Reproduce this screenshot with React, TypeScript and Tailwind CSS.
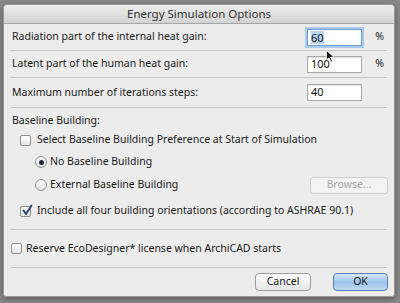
import React from 'react';

const font = { fontFamily: '"Noto Sans", "DejaVu Sans", sans-serif' };

function Separator() {
    return <div className="mx-[7px] h-px bg-[#c4c4c4]" />;
}

function NumberField({ value, focused }: { value: string; focused?: boolean }) {
    return (
        <div
            className={
                'w-[55px] h-[17px] bg-white flex items-center pl-[3px] text-[11px] text-[#111] ' +
                (focused
                    ? 'border border-[#6f9fd6] shadow-[0_0_0_2px_#a9c8ee]'
                    : 'border border-[#a8a8a8] shadow-[inset_0_1px_1px_rgba(0,0,0,0.12)]')
            }
        >
            {focused ? <span className="bg-[#b6d3f5] leading-[13px]">{value}</span> : value}
        </div>
    );
}

function Checkbox({ checked }: { checked?: boolean }) {
    return (
        <div className="w-[11px] h-[11px] rounded-[2px] border border-[#8e8e8e] bg-gradient-to-b from-white to-[#e4e4e4] relative shrink-0">
            {checked && (
                <svg className="absolute -top-[3px] left-0" width="13" height="13" viewBox="0 0 13 13">
                    <path d="M2.5 6.5 L5 10 L10.5 1.5" fill="none" stroke="#2b4a78" strokeWidth="2" strokeLinecap="round" strokeLinejoin="round" />
                </svg>
            )}
        </div>
    );
}

function Radio({ checked }: { checked?: boolean }) {
    return (
        <div className="w-[12px] h-[12px] rounded-full border border-[#8e8e8e] bg-gradient-to-b from-white to-[#e2e2e2] flex items-center justify-center shrink-0">
            {checked && <div className="w-[5px] h-[5px] rounded-full bg-[#1e2a3a]" />}
        </div>
    );
}

export default function App() {
    return (
        <div className="w-[400px] h-[303px] bg-[#8a8a8a] pt-[4px] pl-[3px] pr-[5px] overflow-hidden" style={font}>
            <div className="relative h-[293px] bg-[#ececec] rounded-t-[4px] rounded-b-[3px] border border-[#9a9a9a] shadow-[0_2px_6px_rgba(0,0,0,0.4)] text-[10.5px] text-[#1a1a1a]">
                {/* title bar */}
                <div className="h-[19px] flex items-center justify-center bg-gradient-to-b from-[#ededed] to-[#d3d3d3] border-b border-[#a6a6a6] rounded-t-[4px] text-[11.5px] text-[#333]">
                    Energy Simulation Options
                </div>

                <div className="h-[26px] flex items-center pl-[8px] pr-[10px]">
                    <span className="flex-1">Radiation part of the internal heat gain:</span>
                    <NumberField value="60" focused />
                    <span className="w-[22px] text-right">%</span>
                </div>
                <Separator />

                <div className="h-[26px] flex items-center pl-[8px] pr-[10px]">
                    <span className="flex-1">Latent part of the human heat gain:</span>
                    <NumberField value="100" />
                    <span className="w-[22px] text-right">%</span>
                </div>
                <Separator />

                <div className="h-[29px] flex items-center pl-[8px] pr-[32px]">
                    <span className="flex-1">Maximum number of iterations steps:</span>
                    <NumberField value="40" />
                </div>
                <Separator />

                <div className="h-[121px] flex flex-col pl-[8px] pr-[6px] pt-[6px]">
                    <div className="h-[14px] flex items-center">Baseline Building:</div>
                    <div className="h-[24px] flex items-center gap-[6px] pl-[8px]">
                        <Checkbox />
                        <span>Select Baseline Building Preference at Start of Simulation</span>
                    </div>
                    <div className="h-[20px] flex items-center gap-[3px] pl-[23px]">
                        <Radio checked />
                        <span>No Baseline Building</span>
                    </div>
                    <div className="h-[26px] flex items-center gap-[3px] pl-[23px]">
                        <Radio />
                        <span className="flex-1">External Baseline Building</span>
                        <div className="w-[78px] h-[17px] rounded-[3px] border border-[#cfcfcf] bg-[#f3f3f3] flex items-center justify-center text-[#a5a5a5]">
                            Browse...
                        </div>
                    </div>
                    <div className="h-[26px] flex items-center gap-[6px] pl-[8px]">
                        <Checkbox checked />
                        <span>Include all four building orientations (according to ASHRAE 90.1)</span>
                    </div>
                </div>
                <Separator />

                <div className="h-[37px] flex items-center gap-[4px] pl-[7px]">
                    <Checkbox />
                    <span>Reserve EcoDesigner* license when ArchiCAD starts</span>
                </div>
                <Separator />

                <div className="h-[28px] flex items-center justify-end gap-[22px] pr-[6px]">
                    <div className="w-[56px] h-[18px] rounded-[4px] border border-[#9c9c9c] bg-gradient-to-b from-white to-[#e6e6e6] flex items-center justify-center">
                        Cancel
                    </div>
                    <div className="w-[55px] h-[18px] rounded-[4px] border border-[#5a7fae] bg-gradient-to-b from-[#d5e6f8] via-[#9fc3ea] to-[#bcd8f5] flex items-center justify-center">
                        OK
                    </div>
                </div>

                {/* mouse pointer */}
                <svg className="absolute left-[322px] top-[45px]" width="9" height="13" viewBox="0 0 9 13">
                    <path d="M0.5 0.5 L0.5 10 L3 7.8 L5 12 L6.6 11.3 L4.6 7.2 L8 7.2 Z" fill="#111" stroke="#fff" strokeWidth="0.8" />
                </svg>
            </div>
        </div>
    );
}
